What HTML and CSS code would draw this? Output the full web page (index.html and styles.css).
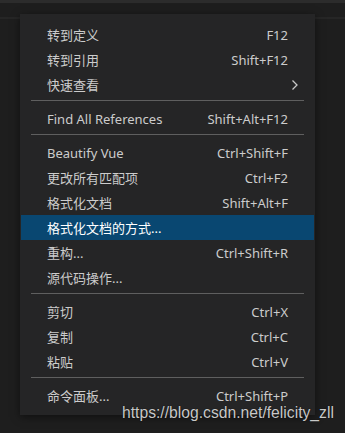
FILE: index.html
```html
<!DOCTYPE html>
<html lang="zh">
<head>
<meta charset="utf-8">
<link rel="stylesheet" href="styles.css">
</head>
<body>
<div class="topstrip"></div>
<div class="editor">
  <div class="menu">
    <div class="item"><span class="label">转到定义</span><span class="key">F12</span></div>
    <div class="item"><span class="label">转到引用</span><span class="key">Shift+F12</span></div>
    <div class="item"><span class="label">快速查看</span><span class="sub"><svg width="8" height="12" viewBox="0 0 8 12"><path d="M1.5 1.5 L6 6 L1.5 10.5" fill="none" stroke="#c8c8c8" stroke-width="1.3"/></svg></span></div>
    <div class="sep"></div>
    <div class="item"><span class="label">Find All References</span><span class="key">Shift+Alt+F12</span></div>
    <div class="sep"></div>
    <div class="item"><span class="label">Beautify Vue</span><span class="key">Ctrl+Shift+F</span></div>
    <div class="item"><span class="label">更改所有匹配项</span><span class="key">Ctrl+F2</span></div>
    <div class="item"><span class="label">格式化文档</span><span class="key">Shift+Alt+F</span></div>
    <div class="item active"><span class="label">格式化文档的方式...</span></div>
    <div class="item"><span class="label">重构...</span><span class="key">Ctrl+Shift+R</span></div>
    <div class="item"><span class="label">源代码操作...</span></div>
    <div class="sep"></div>
    <div class="item"><span class="label">剪切</span><span class="key">Ctrl+X</span></div>
    <div class="item"><span class="label">复制</span><span class="key">Ctrl+C</span></div>
    <div class="item"><span class="label">粘贴</span><span class="key">Ctrl+V</span></div>
    <div class="sep"></div>
    <div class="item"><span class="label">命令面板...</span><span class="key">Ctrl+Shift+P</span></div>
  </div>
  <div class="watermark">https://blog.csdn.net/felicity_zll</div>
</div>
</body>
</html>
```
FILE: styles.css
```css
html, body {
  margin: 0;
  padding: 0;
  background: #1e1e1e;
  width: 345px;
  height: 433px;
  overflow: hidden;
}
body {
  position: relative;
  font-family: "Noto Sans", "Noto Sans CJK SC", sans-serif;
}
.topstrip {
  height: 3px;
  background: #2c2c2c;
}
.editor {
  height: 430px;
  background: linear-gradient(to bottom, #1e1e1e 0, #1e1e1e 14px, #262626 14px, #262626 16px, #1e1e1e 16px);
  padding-top: 11px;
  padding-left: 20px;
  box-sizing: border-box;
}
.menu {
  width: 295px;
  background: #252526;
  padding: 8px 1px 7px 1px;
  box-sizing: border-box;
  box-shadow: 0 2px 8px rgba(0,0,0,0.5);
}
.item {
  height: 25px;
  display: flex;
  align-items: center;
  justify-content: space-between;
  padding: 0 26px 0 26px;
  color: #cccccc;
  font-size: 13px;
}
.item.active {
  background: #094771;
  color: #ffffff;
}
.key {
  color: #cccccc;
}
.sub {
  display: flex;
  margin-right: -11px;
}
.sep {
  height: 1px;
  background: #5f5f5f;
  margin: 3px 10px 5px 10px;
}
.watermark {
  position: absolute;
  left: 122px;
  top: 404px;
  font-family: "Liberation Sans", Arial, sans-serif;
  font-size: 15.7px;
  color: #c8c8c8;
  text-shadow: 0 0 1px #000;
}
```
